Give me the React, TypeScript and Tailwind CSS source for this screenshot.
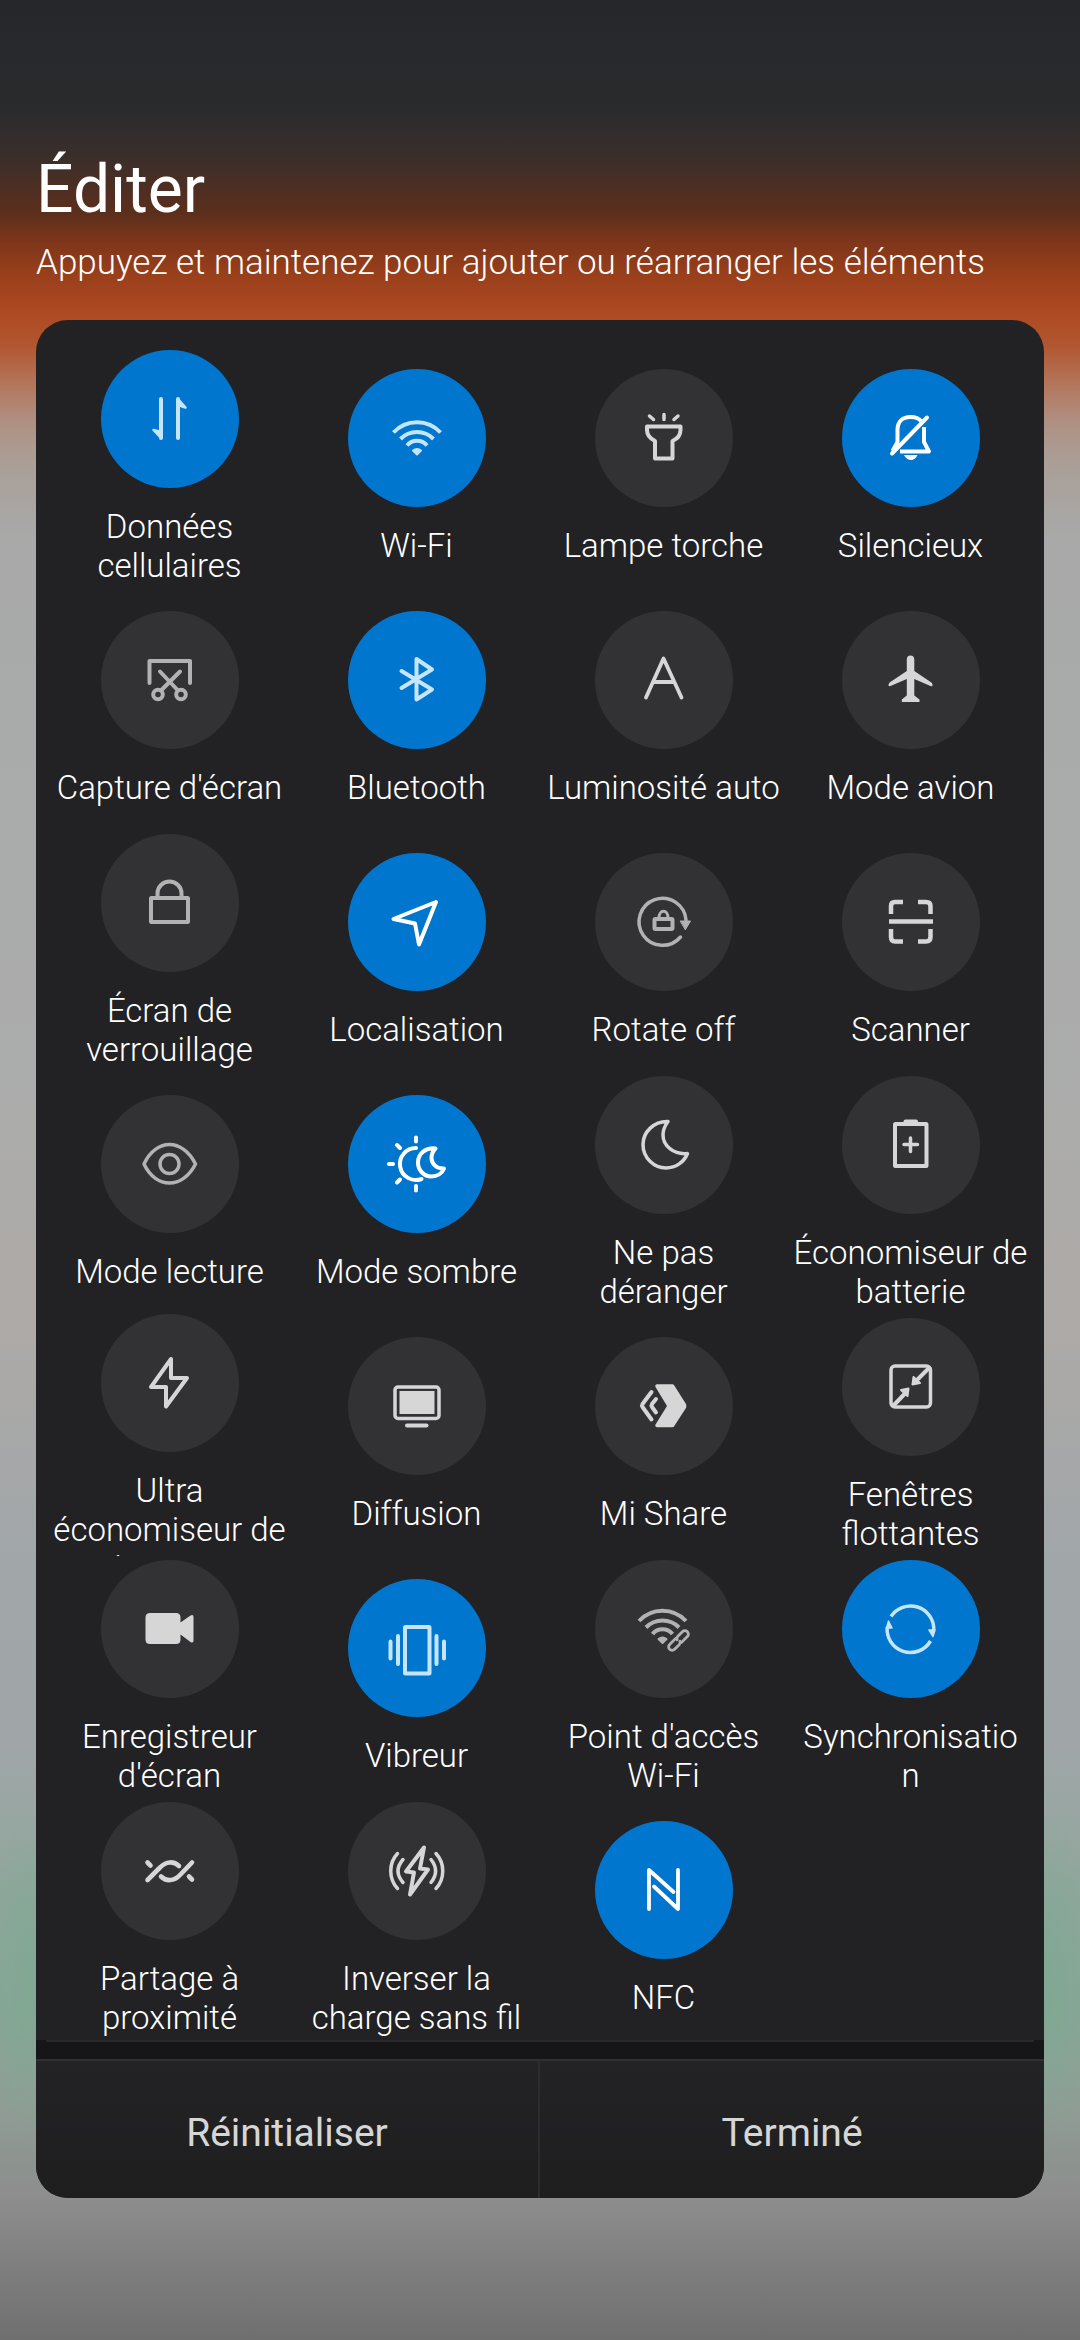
import type { ReactNode } from "react";
import clsx from "clsx";

type Tile = {
  label: string;
  icon: ReactNode;
  active?: boolean;
  dim?: boolean;
};

// All icons share one canvas, with the origin in the middle of the round button.
const tiles: Tile[] = [
  {
    label: "Données cellulaires",
    active: true,
    dim: true,
    icon: (
      <>
        <path d="M-9 -20V19M8 -20V19" />
        <path d="M-9 19L-16.5 11L-9 13ZM8 -20L15.5 -11.5L8 -14Z" fill="currentColor" strokeWidth="2.5" />
      </>
    ),
  },
  {
    label: "Wi-Fi",
    active: true,
    dim: true,
    icon: (
      <>
        <path d="M-23.5 -5.5A32 32 0 0 1 23.5 -5.5M-16.5 1A23 23 0 0 1 16.5 1M-10 7.5A13 13 0 0 1 10 7.5" strokeLinecap="butt" />
        <path d="M-4 12.5Q0 9.5 4 12.5L0 16.5Z" fill="currentColor" strokeWidth="2" />
      </>
    ),
  },
  {
    label: "Lampe torche",
    icon: (
      <>
        <path d="M0 -23.5V-18.5M-14.5 -22L-10.5 -18.5M14 -22L10 -18.5" strokeWidth="3.5" />
        <path d="M-17 -11.5H16.5V-8C16.5 -3 13 1 8.5 3V20.5H-9V3C-13 1 -17 -3 -17 -8Z" />
      </>
    ),
  },
  {
    label: "Silencieux",
    active: true,
    icon: (
      <>
        <path d="M-19 15.5L16 -20.5" />
        <path d="M-18.5 13L-13.5 4V-8C-13.5 -17 -8 -21 -0.5 -21C4 -21 8 -19.5 10 -17M13 -11V4L18 13.5H-11" strokeLinecap="butt" />
        <path d="M-7 17H6.5C5 20.5 2.5 22 0 22S-5.5 20.5 -7 17Z" fill="currentColor" stroke="none" />
      </>
    ),
  },
  {
    label: "Capture d'écran",
    dim: true,
    icon: (
      <>
        <path d="M-20.5 3V-19H20V3M-10 -8.5L7.5 10M10 -8.5L-8.5 10" />
        <circle cx="-12" cy="14.5" r="4.8" />
        <circle cx="11" cy="14.5" r="4.8" />
      </>
    ),
  },
  {
    label: "Bluetooth",
    active: true,
    dim: true,
    icon: <path d="M-15.5 -9L15 9.5L-0.5 19.5V-21L15 -10.5L-15.5 8" />,
  },
  {
    label: "Luminosité auto",
    icon: <path d="M-18 17.5L-0.5 -21.5L17.5 17.5M-11 2H10" strokeWidth="3.8" />,
  },
  {
    label: "Mode avion",
    icon: (
      <path
        d="M-0.5 -24.5C1.8 -24.5 3.3 -23 3.3 -20.5V-9L20 2.2C22 3.6 22.5 7 19.5 6L3.3 -1V15.5L8.5 19.5V22H-9.2V19.5L-4.2 15.5V-1L-20.5 6C-23.2 7 -22.8 3.6 -21 2.2L-4.2 -9V-20.5C-4.2 -23 -2.8 -24.5 -0.5 -24.5Z"
        fill="currentColor"
        stroke="none"
      />
    ),
  },
  {
    label: "Écran de verrouillage",
    dim: true,
    icon: (
      <>
        <rect x="-19" y="-5" width="37" height="24" rx="0.5" />
        <path d="M-12.5 -6V-9.5A12 12 0 0 1 11.5 -9.5V-6" />
      </>
    ),
  },
  {
    label: "Localisation",
    active: true,
    icon: <path d="M19 -20L-23.5 -3L-2 1.5L2 22.5Z" />,
  },
  {
    label: "Rotate off",
    dim: true,
    icon: (
      <>
        <path d="M22 -2A23.5 23.5 0 1 0 16.5 15" strokeWidth="3.5" />
        <path d="M16.5 -1H26.5L21.5 7.5Z" fill="currentColor" strokeWidth="1" />
        <rect x="-9.5" y="-3" width="18" height="10" rx="1" />
        <path d="M-5 -4C-5 -13 4 -13 4 -4" strokeWidth="3" />
      </>
    ),
  },
  {
    label: "Scanner",
    icon: (
      <path
        d="M-20 -8V-16Q-20 -20 -16 -20H-8M7 -20H15Q19.5 -20 19.5 -16V-8M19.5 7V15Q19.5 19.5 15 19.5H7M-8 19.5H-16Q-20 19.5 -20 15V7M-22 -0.5H22"
        strokeLinecap="butt"
        strokeWidth="4.5"
      />
    ),
  },
  {
    label: "Mode lecture",
    dim: true,
    icon: (
      <>
        <path d="M-26 0C-20 -13 -10 -19.5 -0.5 -19.5S19 -13 25.5 0C19 13 9 19 -0.5 19S-20 13 -26 0Z" strokeWidth="3.5" />
        <circle cx="-0.5" cy="0" r="9.5" strokeWidth="3.5" />
      </>
    ),
  },
  {
    label: "Mode sombre",
    active: true,
    icon: (
      <>
        <path d="M-1 -26.5V-22.5M-20 -19L-17 -16M-28 0H-24M-20 18.5L-17 15.5M-1 22V26.5" />
        <path d="M-1 -16A16 16 0 1 0 4.5 15" />
        <path d="M18.5 -15.5C9 -16.5 1 -11 1 -1.5C1 6.5 7 12.5 14.5 12.5C20 12.5 25 9.5 27 4.5C19 5 14.5 -1 14.5 -6C14.5 -10 16 -13 18.5 -15.5Z" />
      </>
    ),
  },
  {
    label: "Ne pas déranger",
    icon: (
      <path d="M4 -23.5C-10 -24 -21 -13 -21 -0.5C-21 13 -10 23 2 23C12 23 20 17 23.5 8.5C10 10 -1 1 -1 -10C-1 -15 1 -19.5 4 -23.5Z" strokeWidth="3.5" />
    ),
  },
  {
    label: "Économiseur de batterie",
    icon: (
      <>
        <rect x="-16" y="-21" width="31.5" height="42" rx="0.5" />
        <path d="M-5.5 -23.5H5" />
        <path d="M-0.5 -7V6.5M-7 -0.5H6.5" strokeWidth="3.5" />
      </>
    ),
  },
  {
    label: "Ultra économiseur de batterie",
    icon: <path d="M1 -24V-5H17L-4 23.5V4H-19Z" />,
  },
  {
    label: "Diffusion",
    icon: (
      <>
        <rect x="-22" y="-19" width="44" height="31.5" rx="3" strokeWidth="3.5" />
        <path d="M-17.5 -15H17.5V8H-17.5Z" fill="currentColor" stroke="none" />
        <path d="M-10 19.5H9.5" />
      </>
    ),
  },
  {
    label: "Mi Share",
    icon: (
      <>
        <path d="M-7 -20H8.5L20.5 -1V1L8.5 19.5H-7L4.5 1V-1Z" fill="currentColor" strokeWidth="3.5" />
        <path d="M-12.5 -14L-21.5 -2Q-22.5 -0.5 -21.5 1L-12.5 13.5M-8 -7L-12 -2Q-13 -0.5 -12 1L-8 6.5" />
      </>
    ),
  },
  {
    label: "Fenêtres flottantes",
    icon: (
      <>
        <rect x="-20" y="-21" width="39.5" height="41" rx="4" strokeWidth="3.5" />
        <path d="M17 -18L5 -6M-17 18L-6 6.5" />
        <path d="M1.5 -2.5L2.5 -10L9 -4ZM-2.5 1.5L-10 3L-3.5 9Z" fill="currentColor" strokeWidth="2" />
      </>
    ),
  },
  {
    label: "Enregistreur d'écran",
    icon: (
      <path
        d="M-20 -16H6Q10.5 -16 10.5 -11.5V-6.5L20.5 -13.5Q23.5 -15 23.5 -12V11.5Q23.5 14.5 20.5 13L10.5 5.5V10.5Q10.5 15 6 15H-20Q-24.5 15 -24.5 10.5V-11.5Q-24.5 -16 -20 -16Z"
        fill="currentColor"
        stroke="none"
      />
    ),
  },
  {
    label: "Vibreur",
    active: true,
    dim: true,
    icon: (
      <>
        <rect x="-12" y="-21" width="24.5" height="46.5" rx="0.5" />
        <path d="M-19 -12V16M19.5 -12V16M-26.5 -6.5V10.5M27 -6.5V10.5" />
      </>
    ),
  },
  {
    label: "Point d'accès Wi-Fi",
    dim: true,
    icon: (
      <>
        <path d="M-25 -8A32 32 0 0 1 22 -8M-18 -1.5A23 23 0 0 1 15 -1.5M-11.5 5A13 13 0 0 1 8.5 5" strokeLinecap="butt" />
        <path d="M-5.5 10Q-1.5 7 2.5 10L-1.5 14Z" fill="currentColor" strokeWidth="2" />
        <g transform="rotate(-45 14.5 11.5)" strokeWidth="2.8">
          <path d="M14 8H5.5A3.5 3.5 0 0 0 5.5 15H12A3.5 3.5 0 0 0 15 13" />
          <path d="M15 15H23.5A3.5 3.5 0 0 0 23.5 8H17A3.5 3.5 0 0 0 14 10" />
        </g>
      </>
    ),
  },
  {
    label: "Synchronisatio\nn",
    active: true,
    dim: true,
    icon: (
      <>
        <path d="M-20 -12.5A23.3 23.3 0 0 1 22.8 1M19.5 12A23.3 23.3 0 0 1 -23.8 -2" strokeWidth="3.5" strokeLinecap="butt" />
        <path d="M18 1H24L22 7.5ZM-19 -1H-24.5L-22.5 -8Z" fill="currentColor" strokeWidth="1.5" />
      </>
    ),
  },
  {
    label: "Partage à proximité",
    icon: (
      <path
        d="M-22.5 9L-10 -3.5C-4 -10 4 -10 9 -5M-9 5.5C-4 10.5 4 10.5 10 4L22 -8.5M-22.5 -8.5L-19.5 -5.5M19 5.5L22 8.5"
        strokeWidth="4.6"
      />
    ),
  },
  {
    label: "Inverser la charge sans fil",
    icon: (
      <>
        <path d="M7 -23.5L-11 0.5L-3 1.5L-7 23.5L11 -1.5L3 -2.5Z" />
        <path
          d="M-19.5 -17.5C-28.5 -8 -28.5 8 -19.5 17.5M-14 -11.5C-20.5 -4 -20.5 4 -14 11.5M19 -17.5C28 -8 28 8 19 17.5M14 -11.5C20 -4 20 4 14 11.5"
          strokeWidth="3.5"
        />
      </>
    ),
  },
  {
    label: "NFC",
    active: true,
    icon: (
      <>
        <path d="M-15 19V-20L9.5 2" strokeWidth="3.8" />
        <path d="M-10 -3.5L14 19V-20" strokeWidth="3.8" />
      </>
    ),
  },
];

function TileButton({ label, icon, active, dim }: Tile) {
  return (
    <li className="flex h-[242px] items-center justify-center">
      <button
        type="button"
        aria-pressed={Boolean(active)}
        className="flex max-h-full w-[236px] flex-col items-center overflow-hidden"
      >
        <span
          className={clsx(
            "mb-[19px] flex size-[138px] shrink-0 items-center justify-center rounded-full",
            active ? "bg-[#0076ce]" : "bg-[#323234]",
            active && dim && "text-[#c5e5fa]",
            active && !dim && "text-white",
            !active && dim && "text-[#b2b2b2]",
            !active && !dim && "text-[#d6d6d6]",
          )}
        >
          <svg
            viewBox="-36 -36 72 72"
            className="size-[72px]"
            fill="none"
            stroke="currentColor"
            strokeWidth="4"
            strokeLinecap="round"
            strokeLinejoin="round"
            aria-hidden="true"
          >
            {icon}
          </svg>
        </span>
        <span className="w-full text-center text-[33px] leading-[39px] font-light whitespace-pre-line">{label}</span>
      </button>
    </li>
  );
}

export default function App() {
  return (
    <main className="min-h-screen bg-[radial-gradient(60px_160px_at_36px_1980px,#78aa9099,#78aa9000),radial-gradient(60px_160px_at_calc(100%-36px)_1980px,#78aa9099,#78aa9000),linear-gradient(to_bottom,#26272b_0px,#2a2b2d_110px,#3a2e2b_155px,#5c2f1c_214px,#7c351a_240px,#963e1a_270px,#ad4822_310px,#b1562f_345px,#b3755a_383px,#b09082_421px,#aa9f98_465px,#a8a9a8_536px,#a8abaa_700px,#abacab_1100px,#aeaaa7_1310px,#a1a6a9_1560px,#a0a6a8_1750px,#8fa69b_1900px,#8aa596_2020px,#8f9e95_2100px,#8d8d8d_2200px,#6f6f6f_2340px)] px-9 pt-[151px] pb-[142px] font-[Roboto,sans-serif] text-white">
      <header className="mb-[35px]">
        <h1 className="text-[66px] leading-[78px] font-normal">Éditer</h1>
        <p className="mt-[12px] text-[35px] leading-[44px] font-light">
          Appuyez et maintenez pour ajouter ou réarranger les éléments
        </p>
      </header>

      <section className="overflow-hidden rounded-[32px] bg-[#222224]">
        <ul className="grid grid-cols-4 px-[10px] pt-[26px]">
          {tiles.map((tile) => (
            <TileButton key={tile.label} {...tile} />
          ))}
        </ul>
        <div className="h-[19px] bg-[#161618] px-[10px]">
          <div className="h-[2px] bg-[#29292b]" />
        </div>
        <footer className="grid h-[139px] grid-cols-2 divide-x-2 divide-[#2c2c2e] border-t-2 border-[#303032] bg-linear-to-b from-[#232325] to-[#1e1e1f] text-[39px] text-[#d6d6d6]">
          <button type="button" className="pt-2">
            Réinitialiser
          </button>
          <button type="button" className="pt-2">
            Terminé
          </button>
        </footer>
      </section>
    </main>
  );
}
